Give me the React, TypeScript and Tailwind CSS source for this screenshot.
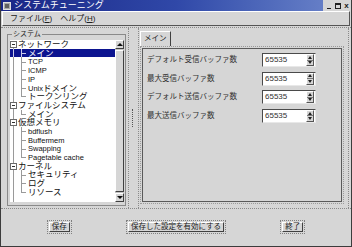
import React from "react";

const font = "font-['Liberation_Sans','Noto_Sans_CJK_JP',sans-serif]";

type Row = { label: string; depth: 0 | 1; last?: boolean; sel?: boolean };

const rows: Row[] = [
  { label: "ネットワーク", depth: 0 },
  { label: "メイン", depth: 1, sel: true },
  { label: "TCP", depth: 1 },
  { label: "ICMP", depth: 1 },
  { label: "IP", depth: 1 },
  { label: "Unixドメイン", depth: 1 },
  { label: "トークンリング", depth: 1, last: true },
  { label: "ファイルシステム", depth: 0 },
  { label: "メイン", depth: 1, last: true },
  { label: "仮想メモリ", depth: 0 },
  { label: "bdflush", depth: 1 },
  { label: "Buffermem", depth: 1 },
  { label: "Swapping", depth: 1 },
  { label: "Pagetable cache", depth: 1, last: true },
  { label: "カーネル", depth: 0 },
  { label: "セキュリティ", depth: 1 },
  { label: "ログ", depth: 1 },
  { label: "リソース", depth: 1, last: true },
  { label: "", depth: 1 },
];

const fields = [
  "デフォルト受信バッファ数",
  "最大受信バッファ数",
  "デフォルト送信バッファ数",
  "最大送信バッファ数",
];

// latin bits are drawn smaller than the kana, like the bitmap font in the shot
function Label({ text }: { text: string }) {
  const parts = text.split(/([A-Za-z ]+)/).filter(Boolean);
  return (
    <>
      {parts.map((p, i) =>
        /[A-Za-z]/.test(p) ? (
          <span key={i} className="text-[7.5px]">
            {p}
          </span>
        ) : (
          <span key={i}>{p}</span>
        )
      )}
    </>
  );
}

function TreeRow({ row, first }: { row: Row; first: boolean }) {
  const line = row.sel ? "bg-[#c8c8e8]" : "bg-[#9a9a9a]";
  return (
    <div
      className={`relative h-[8.7px] shrink-0 flex items-center ${
        row.sel ? "bg-[#0c1490] text-white" : "text-[#101010]"
      }`}
    >
      <span className={`absolute left-[3px] w-px ${line} ${first ? "top-1/2 bottom-0" : "top-0 bottom-0"}`} />
      {row.depth === 0 ? (
        <span className="absolute left-[0px] top-[1px] w-[7px] h-[7px] bg-white border border-[#6a6a6a] flex items-center justify-center">
          <span className="w-[3px] h-px bg-[#303030]" />
        </span>
      ) : (
        row.label && (
          <>
            <span className={`absolute left-[11px] w-px ${line} top-0 ${row.last ? "h-1/2" : "bottom-0"}`} />
            <span className={`absolute left-[11px] top-1/2 w-[5px] h-px ${line}`} />
          </>
        )
      )}
      <span className={`${row.depth === 0 ? "pl-[8px]" : "pl-[18px]"} text-[8.5px] leading-none whitespace-nowrap`}>
        <Label text={row.label} />
      </span>
    </div>
  );
}

function SpinBox() {
  return (
    <div className="w-[54px] h-[14px] flex bg-white border border-t-[#4a4a4a] border-l-[#4a4a4a] border-r-[#e8e8e8] border-b-[#e8e8e8]">
      <span className="flex-1 flex items-center pl-[2px] text-[8px] text-[#303030]">65535</span>
      <div className="w-[8px] mr-[1px] flex flex-col border border-t-white border-l-white border-r-[#555] border-b-[#555] bg-[#d6d6d6]">
        <span className="flex-1 flex items-center justify-center">
          <span className="w-0 h-0 border-x-[2px] border-x-transparent border-b-[3px] border-b-[#202020]" />
        </span>
        <span className="h-px bg-[#777]" />
        <span className="flex-1 flex items-center justify-center">
          <span className="w-0 h-0 border-x-[2px] border-x-transparent border-t-[3px] border-t-[#202020]" />
        </span>
      </div>
    </div>
  );
}

function Btn({ children }: { children: React.ReactNode }) {
  return (
    <div className="border border-dotted border-[#808080] p-px">
      <div className="h-[10px] px-[2px] flex items-center bg-[#d6d6d6] border border-t-white border-l-white border-r-[#404040] border-b-[#404040] text-[7.5px] leading-none text-[#202020]">
        {children}
      </div>
    </div>
  );
}

export default function App() {
  return (
    <div className={`${font} w-[352px] h-[247px] bg-[#d6d6d6] flex flex-col border-x border-b border-[#3c3c3c] overflow-hidden`}>
      {/* title bar */}
      <div className="h-[11px] shrink-0 flex items-center bg-linear-to-r from-[#1a2686] via-[#3048a8] to-[#7088cc]">
        <span className="ml-[2px] w-[8px] h-[8px] bg-[#a8a8a8] border border-[#e0e0e0] flex items-center justify-center">
          <span className="w-[4px] h-[4px] bg-[#606060]" />
        </span>
        <span className="ml-[3px] text-[9px] leading-none text-white">システムチューニング</span>
        <div className="ml-auto h-full flex bg-[#d6d6d6] pl-[1px]">
          <span className="w-[9px] flex items-end justify-center pb-[2px]">
            <span className="w-[4px] h-px bg-[#202020]" />
          </span>
          <span className="w-[9px] flex items-center justify-center">
            <span className="w-[6px] h-[6px] border border-[#202020] border-t-2" />
          </span>
          <span className="w-[9px] flex items-center justify-center text-[8px] leading-none font-bold text-[#202020]">x</span>
        </div>
      </div>

      {/* menu bar */}
      <div className="h-[15px] shrink-0 mx-[1px] flex items-center gap-[8px] pl-[7px] text-[8px] text-[#202020] border border-t-white border-l-white border-r-[#555] border-b-[#555]">
        <span>
          ファイル(<u>F</u>)
        </span>
        <span>
          ヘルプ(<u>H</u>)
        </span>
      </div>

      <div className="h-px shrink-0" />
      <div className="flex-1 flex border-y border-dotted border-[#8a8a8a] min-h-0">
        {/* left pane */}
        <div className="w-[128px] shrink-0 border-r border-dotted border-[#8a8a8a] pl-[6px] pr-[2px] pt-[6px] pb-[2px]">
          <div className="relative h-full border border-[#8a8a8a] pl-[2px] pr-px pt-[5px] pb-[3px]">
            <span className="absolute left-[4px] -top-[5px] px-px bg-[#d6d6d6] text-[7px] leading-none text-[#202020]">
              システム
            </span>
            <div className="h-full flex">
              <div className="flex-1 bg-white flex flex-col overflow-hidden">
                {rows.map((r, i) => (
                  <TreeRow key={i} row={r} first={i === 0} />
                ))}
              </div>
              <div className="w-[9px] flex flex-col bg-[#c4c4c4]">
                <div className="h-[9px] bg-[#d6d6d6] border border-t-white border-l-white border-r-[#404040] border-b-[#404040] flex items-center justify-center">
                  <span className="w-0 h-0 border-x-[3px] border-x-transparent border-b-[3px] border-b-[#101010]" />
                </div>
                <div className="flex-1 my-px bg-[#d6d6d6] border border-t-white border-l-white border-r-[#404040] border-b-[#404040]" />
                <div className="h-[9px] bg-[#d6d6d6] border border-t-white border-l-white border-r-[#404040] border-b-[#404040] flex items-center justify-center">
                  <span className="w-0 h-0 border-x-[3px] border-x-transparent border-t-[3px] border-t-[#101010]" />
                </div>
              </div>
            </div>
          </div>
        </div>

        {/* splitter */}
        <div className="w-[9px] shrink-0 flex items-center pl-[3px]">
          <span className="h-[18px] border-l border-dotted border-[#555]" />
        </div>

        {/* right pane */}
        <div className="flex-1 flex flex-col border-l border-r border-dotted border-[#8a8a8a] pl-px pr-[4px] pt-[3px] pb-[4px] mr-[2px]">
          <div className="flex">
            <div className="h-[15px] px-[3px] flex items-center border-t border-l border-r border-t-white border-l-white border-r-[#404040] text-[7.5px] leading-none text-[#202020]">
              メイン
            </div>
          </div>
          <div className="flex-1 border border-dotted border-[#9a9a9a] p-px">
            <div className="h-full border border-[#5a5a5a] pl-[4px] pt-[4px] flex flex-col gap-[4.6px]">
              {fields.map((f) => (
                <div key={f} className="h-[14px] flex items-center">
                  <span className="w-[115px] text-[7.5px] leading-none text-[#303030]">{f}</span>
                  <SpinBox />
                </div>
              ))}
            </div>
          </div>
        </div>
      </div>

      {/* buttons */}
      <div className="h-[37px] shrink-0 grid grid-cols-3 items-center justify-items-center pb-[1px]">
        <Btn>保存</Btn>
        <Btn>保存した設定を有効にする</Btn>
        <Btn>終了</Btn>
      </div>
    </div>
  );
}
